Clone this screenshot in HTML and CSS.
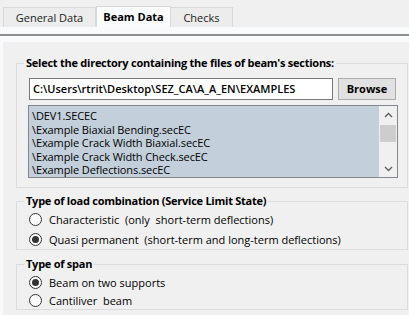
FILE: index.html
```html
<!DOCTYPE html>
<html>
<head>
    <title>Beam Data</title>
    <link rel="stylesheet" href="styles.css">
</head>
<body>
    <div class="tabs">
        <div class="tab tab-general">General Data</div>
        <div class="tab tab-beam active">Beam Data</div>
        <div class="tab tab-checks">Checks</div>
    </div>
    <div class="tab-edge"></div>

    <div class="content">
        <div class="page">
            <fieldset class="group group-dir">
                <legend>Select the directory containing the files of beam's sections:</legend>
                <div class="path-row">
                    <div class="path-box">C:\Users\rtrit\Desktop\SEZ_CA\A_A_EN\EXAMPLES</div>
                    <div class="button">Browse</div>
                </div>
                <div class="listbox">
                    <div class="items">
                        <div class="item">\DEV1.SECEC</div>
                        <div class="item">\Example Biaxial Bending.secEC</div>
                        <div class="item">\Example Crack Width Biaxial.secEC</div>
                        <div class="item">\Example Crack Width Check.secEC</div>
                        <div class="item">\Example Deflections.secEC</div>
                    </div>
                    <div class="scrollbar">
                        <div class="arrow">
                            <svg width="9" height="6" viewBox="0 0 9 6"><path d="M1 5 L4.5 1.5 L8 5" fill="none" stroke="#606060" stroke-width="1.4"/></svg>
                        </div>
                        <div class="thumb"></div>
                        <div class="track"></div>
                        <div class="arrow">
                            <svg width="9" height="6" viewBox="0 0 9 6"><path d="M1 1 L4.5 4.5 L8 1" fill="none" stroke="#606060" stroke-width="1.4"/></svg>
                        </div>
                    </div>
                </div>
            </fieldset>

            <fieldset class="group group-load">
                <legend>Type of load combination (Service Limit State)</legend>
                <div class="option"><span class="radio"></span><span class="label">Characteristic  (only  short-term deflections)</span></div>
                <div class="option"><span class="radio on"></span><span class="label">Quasi permanent  (short-term and long-term deflections)</span></div>
            </fieldset>

            <fieldset class="group group-span">
                <legend>Type of span</legend>
                <div class="option"><span class="radio on"></span><span class="label">Beam on two supports</span></div>
                <div class="option"><span class="radio"></span><span class="label">Cantiliver  beam</span></div>
            </fieldset>
        </div>
    </div>
</body>
</html>
```

FILE: styles.css
```css
body {
    margin: 0;
    width: 409px;
    height: 315px;
    overflow: hidden;
    background: #f0f0f0;
    color: #000;
    font-family: 'Open Sans', 'Noto Sans', sans-serif;
    font-size: 11px;
}

/* tab strip */
.tabs {
    display: flex;
    align-items: flex-end;
    height: 27px;
    padding-left: 3px;
    background: #f0f0f0;
}
.tab {
    box-sizing: border-box;
    height: 20px;
    line-height: 19px;
    border: 1px solid #d9d9d9;
    border-bottom: none;
    background: #ececec;
    color: #222;
    text-align: center;
}
.tab-general {
    width: 93px;
}
.tab-beam {
    width: 75px;
    height: 21px;
    background: #fafbfd;
    font-weight: bold;
    color: #000;
}
.tab-checks {
    width: 62px;
    border-left: none;
}
.tab-edge {
    height: 7px;
    background: #f8fafc;
    border-bottom: 2px solid #8f8f8f;
}
.content {
    background: #f8fafc;
    padding: 6px 0 0 3px;
}
.page {
    height: 260px;
    padding-top: 13px;
    background: #f0f0f0;
}

/* group boxes */
.group {
    min-width: 0;
    margin: 0 1px 0 13px;
    padding: 0 9px 9px 11px;
    border: 1px solid #dcdcdc;
}
.group legend {
    margin-left: -4px;
    padding: 0 2px;
    line-height: 16px;
    font-weight: bold;
    letter-spacing: -0.25px;
}
.group-load,
.group-span {
    margin-top: 5px;
    padding-bottom: 0;
}
.group-span {
    margin-top: 6px;
    padding-top: 1px;
}

.path-row {
    display: flex;
    gap: 5px;
    margin-top: 7px;
    padding-left: 1px;
}
.path-box {
    box-sizing: border-box;
    width: 304px;
    height: 22px;
    padding: 0 3px;
    line-height: 20px;
    border: 1px solid #7a7a7a;
    background: #fff;
    font-weight: 600;
    white-space: nowrap;
    overflow: hidden;
}
.button {
    box-sizing: border-box;
    width: 58px;
    height: 22px;
    line-height: 20px;
    border: 1px solid #adadad;
    background: #e1e1e1;
    text-align: center;
    font-weight: bold;
}

.listbox {
    display: flex;
    box-sizing: border-box;
    height: 73px;
    margin-top: 5px;
    border: 1px solid #828790;
    background: #c3d0dc;
}
.items {
    flex: 1;
    padding: 3px 0 0 3px;
}
.item {
    line-height: 13.5px;
    white-space: nowrap;
    letter-spacing: -0.1px;
}
.scrollbar {
    display: flex;
    flex-direction: column;
    width: 18px;
    background: #f0f0f0;
}
.arrow {
    display: flex;
    align-items: center;
    justify-content: center;
    height: 17px;
}
.thumb {
    height: 17px;
    margin: 2px 1px 0;
    background: #cdcdcd;
}
.track {
    flex: 1;
}

/* radio buttons */
.option {
    display: flex;
    align-items: center;
    height: 20px;
    padding-left: 1px;
}
.group-load .option + .option {
    margin-top: 1px;
}
.group-load .option:last-child {
    height: 19px;
}
.group-span .option {
    height: 19px;
}
.group-span .option:last-child {
    height: 17px;
}
.radio {
    display: flex;
    align-items: center;
    justify-content: center;
    box-sizing: border-box;
    width: 13px;
    height: 13px;
    margin-right: 7px;
    border: 1px solid #333;
    border-radius: 50%;
    background: #fff;
}
.radio.on::after {
    content: '';
    width: 7px;
    height: 7px;
    border-radius: 50%;
    background: #333;
}
.label {
    white-space: pre;
}
```
